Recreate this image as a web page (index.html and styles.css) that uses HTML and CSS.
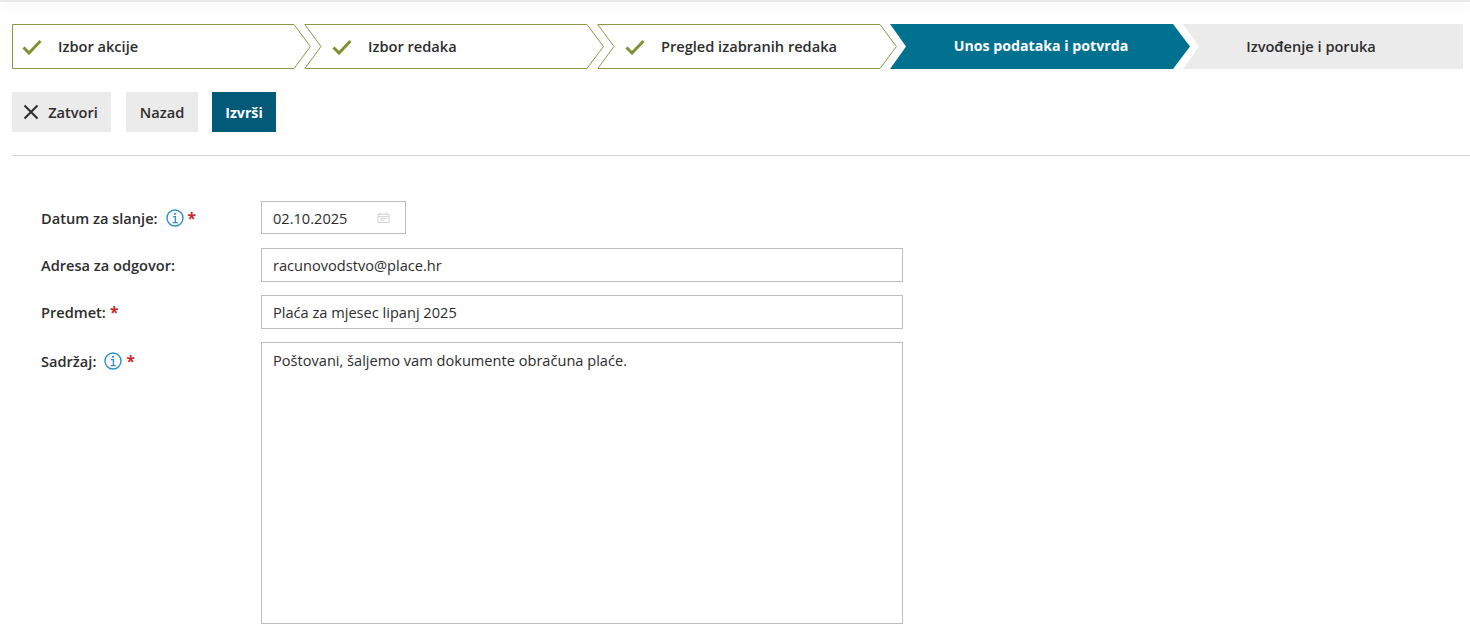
FILE: index.html
```html
<!DOCTYPE html>
<html lang="hr">
<head>
<meta charset="utf-8">
<title>Unos podataka i potvrda</title>
<link rel="stylesheet" href="styles.css">
</head>
<body>
<div class="topbar"></div>
<main class="page">
  <ol class="steps">
    <li class="step step-first step-done">
      <svg class="step-bg" viewBox="0 0 299 45" aria-hidden="true"><path class="line" d="M.5 .5H282L298.4 22.5L282 44.5H.5Z"/></svg>
      <svg class="check" viewBox="0 0 20 16" aria-hidden="true"><path d="M1.5 8.5L7 14L18.5 2"/></svg>
      <span class="step-label">Izbor akcije</span>
    </li>
    <li class="step step-done">
      <svg class="step-bg" viewBox="0 0 300 45" aria-hidden="true"><path class="line" d="M.8 .5H283L299.4 22.5L283 44.5H.8L17 22.5Z"/></svg>
      <svg class="check" viewBox="0 0 20 16" aria-hidden="true"><path d="M1.5 8.5L7 14L18.5 2"/></svg>
      <span class="step-label">Izbor redaka</span>
    </li>
    <li class="step step-done">
      <svg class="step-bg" viewBox="0 0 300 45" aria-hidden="true"><path class="line" d="M.8 .5H283L299.4 22.5L283 44.5H.8L17 22.5Z"/></svg>
      <svg class="check" viewBox="0 0 20 16" aria-hidden="true"><path d="M1.5 8.5L7 14L18.5 2"/></svg>
      <span class="step-label">Pregled izabranih redaka</span>
    </li>
    <li class="step step-active">
      <svg class="step-bg" viewBox="0 0 300 45" aria-hidden="true"><path d="M0 0H283L300 22.5L283 45H0L16 22.5Z"/></svg>
      <span class="step-label">Unos podataka i potvrda</span>
    </li>
    <li class="step step-last">
      <svg class="step-bg" viewBox="0 0 280 45" aria-hidden="true"><path d="M0 0H280V45H0L16 22.5Z"/></svg>
      <span class="step-label">Izvođenje i poruka</span>
    </li>
  </ol>

  <div class="actions">
    <button class="btn btn-close" type="button">
      <svg class="x-icon" viewBox="0 0 16 16" aria-hidden="true"><path d="M1.5 1.5L14.5 14.5M14.5 1.5L1.5 14.5"/></svg>
      Zatvori
    </button>
    <button class="btn btn-back" type="button">Nazad</button>
    <button class="btn btn-primary" type="button">Izvrši</button>
  </div>

  <hr class="divider">

  <form class="form">
    <div class="row row-date">
      <label class="label">Datum za slanje:
        <svg class="info" viewBox="0 0 18 18" aria-hidden="true"><circle cx="9" cy="9" r="8"/><path d="M7 7.6H9.4V13.6M6.8 13.6H11.8"/><circle class="dot" cx="9" cy="4.8" r="1.1"/></svg>
        <span class="req">*</span></label>
      <div class="date-field">
        <span>02.10.2025</span>
        <svg class="cal" viewBox="0 0 14 12" aria-hidden="true"><path d="M1 2.5H13V11.5H1ZM1 5H13M3.5 .5V2.5M10.5 .5V2.5M3.5 7H10.5M3.5 9H8"/></svg>
      </div>
    </div>
    <div class="row">
      <label class="label">Adresa za odgovor:</label>
      <div class="field">racunovodstvo@place.hr</div>
    </div>
    <div class="row">
      <label class="label">Predmet:<span class="req">*</span></label>
      <div class="field">Plaća za mjesec lipanj 2025</div>
    </div>
    <div class="row row-area">
      <label class="label">Sadržaj:
        <svg class="info" viewBox="0 0 18 18" aria-hidden="true"><circle cx="9" cy="9" r="8"/><path d="M7 7.6H9.4V13.6M6.8 13.6H11.8"/><circle class="dot" cx="9" cy="4.8" r="1.1"/></svg>
        <span class="req">*</span></label>
      <div class="field field-area">Poštovani, šaljemo vam dokumente obračuna plaće.</div>
    </div>
  </form>
</main>
</body>
</html>
```

FILE: styles.css
```css
* { box-sizing: border-box; }
html, body { margin: 0; padding: 0; background: #fff; overflow: hidden; }
body {
  height: 638px;
  font-family: "Open Sans", "Liberation Sans", sans-serif;
  font-size: 14.6px;
  color: #2d2d2d;
}
.topbar {
  height: 2px;
  background: #e9e9e9;
  box-shadow: 0 3px 12px rgba(0, 0, 0, .16);
}
.page { padding: 22px 0 0 12px; }

.steps {
  display: flex;
  list-style: none;
  margin: 0;
  padding: 0;
  width: 1451px;
  height: 45px;
}
.step {
  position: relative;
  display: flex;
  align-items: center;
  width: 300px;
  height: 45px;
  margin-left: -7px;
  font-weight: 600;
}
.step-first { width: 299px; margin-left: 0; }
.step-last { width: 280px; }
.step-bg {
  position: absolute;
  inset: 0;
  width: 100%;
  height: 100%;
}
.step-done .line { fill: #fff; stroke: #8b9a47; stroke-width: 1; }
.step-done .step-bg { overflow: visible; }
.step-active .step-bg path { fill: #007290; }
.step-last .step-bg path { fill: #ebebeb; }
.check {
  position: relative;
  flex: none;
  width: 20px;
  height: 16px;
  margin: 0 16px 0 28px;
  fill: none;
  stroke: #7e9136;
  stroke-width: 3;
}
.step-first .check { margin-left: 10px; }
.step-label { position: relative; padding-bottom: 2px; }
.step-active .step-label,
.step-last .step-label { width: 100%; text-align: center; }
.step-active { color: #fff; font-weight: 700; font-size: 14.2px; }
.step-active .step-label { padding-left: 2px; }
.step-last .step-label { padding-right: 24px; }

.actions {
  display: flex;
  margin-top: 23px;
  height: 40px;
}
.btn {
  display: flex;
  align-items: center;
  justify-content: center;
  height: 40px;
  border: 0;
  padding: 0;
  font: 600 14.6px "Open Sans", "Liberation Sans", sans-serif;
  color: #2d2d2d;
  background: #ebebeb;
}
.btn-close { width: 99px; gap: 9px; padding-right: 2px; }
.btn-back { width: 72px; margin-left: 15px; }
.btn-primary { width: 64px; margin-left: 14px; background: #005a78; color: #fff; font-weight: 700; font-size: 14.2px; }
.x-icon { width: 16px; height: 16px; fill: none; stroke: #2d2d2d; stroke-width: 2; }

.divider {
  height: 1px;
  border: 0;
  margin: 23px 0 0;
  background: #d4d4d4;
}

.form { padding: 45px 0 0 29px; }
.row {
  display: flex;
  align-items: center;
  margin-top: 13px;
}
.row-date { margin-top: 0; margin-bottom: 14px; }
.label {
  display: flex;
  align-items: center;
  width: 220px;
  flex: none;
  font-weight: 600;
}
.row-area { align-items: flex-start; }
.row-area .label { margin-top: 8px; }
.info {
  flex: none;
  width: 18px;
  height: 18px;
  margin-left: 8px;
  fill: none;
  stroke: #2f8fc9;
  stroke-width: 1.4;
}
.info .dot { fill: #2f8fc9; stroke: none; }
.req {
  margin-left: 4px;
  color: #c9252d;
  font-weight: 700;
  font-size: 15.5px;
}
.date-field, .field {
  display: flex;
  align-items: center;
  border: 1px solid #bdbdbd;
  padding: 0 11px;
  background: #fff;
  font-weight: 400;
}
.date-field {
  justify-content: space-between;
  width: 145px;
  height: 33px;
  padding-right: 15px;
}
.field { width: 642px; height: 34px; }
.field-area {
  display: block;
  height: 282px;
  padding-top: 7px;
  line-height: 20px;
}
.cal {
  width: 13px;
  height: 11px;
  fill: none;
  stroke: #cfcfcf;
  stroke-width: 1;
}
```
